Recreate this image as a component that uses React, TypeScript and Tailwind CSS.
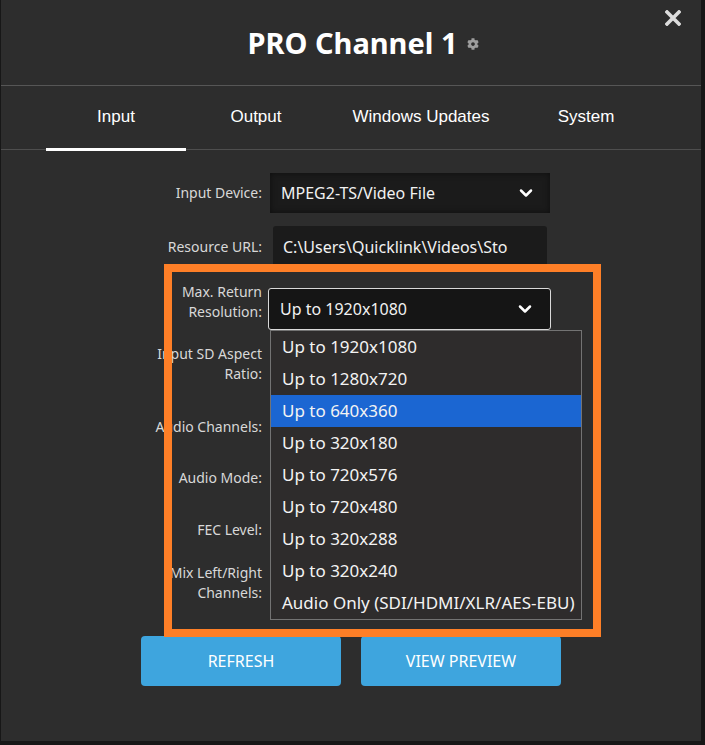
import { ChevronDown } from "lucide-react";
import { FaCog } from "react-icons/fa";

const resolutions = [
  "Up to 1920x1080",
  "Up to 1280x720",
  "Up to 640x360",
  "Up to 320x180",
  "Up to 720x576",
  "Up to 720x480",
  "Up to 320x288",
  "Up to 320x240",
  "Audio Only (SDI/HDMI/XLR/AES-EBU)",
];

const tabs = [
  { name: "Input", width: "w-[140px]", active: true },
  { name: "Output", width: "w-[140px]", active: false },
  { name: "Windows Updates", width: "w-[190px]", active: false },
  { name: "System", width: "w-[140px]", active: false },
];

const sans = "font-['Noto_Sans',sans-serif]";

// Label cell on the left of every form row
const Label = ({ lines, className = "" }: { lines: string[]; className?: string }) => (
  <div className={`w-[261px] shrink-0 text-right text-[14px] leading-[20px] text-[#d8d8d8] ${className}`}>
    {lines.map((l) => (
      <div key={l}>{l}</div>
    ))}
  </div>
);

export default function App() {
  const highlighted = 2;

  return (
    <div className={`w-[705px] h-[745px] bg-[#171717] overflow-hidden ${sans}`}>
      <div className="relative ml-px w-[700px] h-[741px] bg-[#2d2d2d] flex flex-col">
        {/* ===== Header ===== */}
        <div className="h-[86px] shrink-0 border-b border-[#565656] flex items-center justify-center">
          <h1 className="relative text-[29px] font-bold text-white leading-none ml-[3px]">
            PRO Channel 1
            <FaCog className="absolute left-[calc(100%+9px)] top-[10px] text-[#9d9d9d]" size={12} />
          </h1>
          <button className="absolute right-[20px] top-[10px] text-[#dcdcdc]">
            <svg width="16" height="16" viewBox="0 0 16 16">
              <path d="M2 2 L14 14 M14 2 L2 14" stroke="currentColor" strokeWidth="3.6" strokeLinecap="square" />
            </svg>
          </button>
        </div>

        {/* ===== Tabs ===== */}
        <div className="h-[64px] shrink-0 border-b border-[#4e4e4e] flex pl-[45px]">
          {tabs.map((t) => (
            <div
              key={t.name}
              className={`relative ${t.width} flex items-center justify-center pb-[2px] font-['Liberation_Sans',sans-serif] text-[17px] text-white`}
            >
              {t.name}
              {t.active && <span className="absolute left-0 right-0 bottom-[-2px] h-[3px] bg-white" />}
            </div>
          ))}
        </div>

        {/* ===== Form ===== */}
        <div className="flex flex-col">
          <div className="mt-[23px] h-[40px] flex items-center">
            <Label lines={["Input Device:"]} />
            <div className="ml-[8px] w-[280px] h-[40px] bg-[#1b1b1b] shadow-[inset_0_0_6px_rgba(0,0,0,0.5)] flex items-center justify-between pl-[11px] pr-[14px] text-[16px] text-[#f1f1f1]">
              <span>MPEG2-TS/Video File</span>
              <ChevronDown size={20} strokeWidth={3} className="text-white" />
            </div>
          </div>

          <div className="mt-[13px] h-[42px] flex items-center">
            <Label lines={["Resource URL:"]} />
            <div className="ml-[11px] w-[274px] h-[42px] rounded-[3px] bg-[#1b1b1b] flex items-center pl-[10px] text-[16px] text-[#f1f1f1] whitespace-nowrap">
              <span>C:\Users\Quicklink\Videos\Sto</span>
            </div>
          </div>

          <div className="mt-[20px] h-[42px] flex items-center">
            <Label lines={["Max. Return", "Resolution:"]} className="pb-[14px]" />
            <div className="relative ml-[6px]">
              <div className="w-[283px] h-[42px] rounded-[3px] border border-[#d9d9d9] bg-[#151515] flex items-center justify-between pl-[11px] pr-[15px] text-[16px] text-[#f1f1f1]">
                <span>Up to 1920x1080</span>
                <ChevronDown size={20} strokeWidth={3} className="text-white" />
              </div>
              {/* open option list */}
              <ul className="absolute left-[2px] top-full z-10 w-[312px] bg-[#2e2c2c] border border-[#737373]">
                {resolutions.map((r, i) => (
                  <li
                    key={r}
                    className={`h-[32px] flex items-center pl-[11px] text-[17px] whitespace-nowrap text-[#f3f3f3] ${
                      i === highlighted ? "bg-[#1b66d2]" : ""
                    }`}
                  >
                    {r}
                  </li>
                ))}
              </ul>
            </div>
          </div>

          <div className="mt-[13px] h-[42px] flex items-center">
            <Label lines={["Input SD Aspect", "Ratio:"]} />
          </div>
          <div className="mt-[21px] h-[42px] flex items-center">
            <Label lines={["Audio Channels:"]} />
          </div>
          <div className="mt-[9px] h-[42px] flex items-center">
            <Label lines={["Audio Mode:"]} />
          </div>
          <div className="mt-[10px] h-[42px] flex items-center">
            <Label lines={["FEC Level:"]} />
          </div>
          <div className="mt-[11px] h-[42px] flex items-center">
            <Label lines={["Mix Left/Right", "Channels:"]} />
          </div>

          <div className="mt-[32px] flex gap-[20px] pl-[140px]">
            <button className="w-[200px] h-[50px] rounded-[4px] bg-[#3ea5de] text-white text-[16px] uppercase">
              Refresh
            </button>
            <button className="w-[200px] h-[50px] rounded-[4px] bg-[#3ea5de] text-white text-[16px] uppercase">
              View Preview
            </button>
          </div>
        </div>

        {/* highlight frame drawn over the resolution field */}
        <div className="pointer-events-none absolute left-[163px] top-[264px] w-[437px] h-[373px] border-[8px] border-[#fe7f27] z-20" />
      </div>
    </div>
  );
}
